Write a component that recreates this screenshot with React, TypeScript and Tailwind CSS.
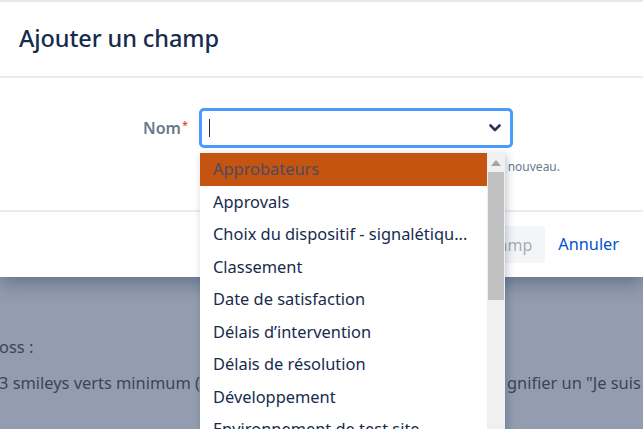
import React from "react";

const items = [
  "Approbateurs",
  "Approvals",
  "Choix du dispositif - signalétiqu...",
  "Classement",
  "Date de satisfaction",
  "Délais d’intervention",
  "Délais de résolution",
  "Développement",
  "Environnement de test site",
];

export default function App() {
  return (
    <div
      className="relative w-[643px] h-[429px] overflow-hidden bg-[#939daf]"
      style={{ fontFamily: '"Noto Sans", "Open Sans", sans-serif' }}
    >
      {/* Dialog */}
      <div className="relative z-10 bg-white border-t-2 border-[#e6e8ec] shadow-[0_6px_18px_rgba(9,30,66,0.35)]">
        <div className="h-[76px] flex items-center px-[19px] border-b-2 border-[#ebecf0]">
          <h1 className="text-[23.5px] font-medium text-[#172b4d] tracking-[-0.1px]">Ajouter un champ</h1>
        </div>
        <div className="h-[132px] pt-[30px]">
          <div className="flex items-center">
            <div className="w-[188px] text-right text-[16px] font-semibold text-[#6b778c]">
              Nom<sup className="text-[#de350b] text-[11px] ml-[1px] font-normal">*</sup>
            </div>
            <div className="ml-[11px] w-[314px] h-[40px] border-[3px] border-[#4c9aff] rounded-[5px] flex items-center justify-between px-[7px]">
              <div className="w-[1px] h-[18px] bg-[#172b4d]" />
              <svg width="12" height="8" viewBox="0 0 12 8" className="mr-[2px]">
                <path d="M1.5 1.5 L6 6 L10.5 1.5" fill="none" stroke="#253858" strokeWidth="2.6" strokeLinecap="round" strokeLinejoin="round" />
              </svg>
            </div>
          </div>
          <div className="ml-[199px] w-[361px] mt-[10px] text-right whitespace-nowrap text-[12px] text-[#6b778c]">
            Choisissez un champ existant ou créez-en un nouveau.
          </div>
        </div>
        <div className="h-[67px] border-t-2 border-[#ebecf0] flex items-center justify-end pr-[12px]">
          <button className="h-[37px] px-[13px] rounded-[3px] bg-[#f4f5f7] text-[16px] text-[#a5adba]">
            Ajouter un champ
          </button>
          <button className="h-[37px] px-[12px] ml-[1px] text-[16.3px] text-[#0052cc]">Annuler</button>
        </div>
      </div>

      {/* Page behind blanket */}
      <div className="pt-[59px] text-[16.4px] text-[#3a4558] leading-[22px]">
        <p className="ml-[-1px]">oss :</p>
        <div className="grid grid-cols-[507px_1fr] mt-[14px]">
          <span className="whitespace-nowrap ml-[-1px]">3 smileys verts minimum (</span>
          <span className="whitespace-nowrap">gnifier un "Je suis satisfait"</span>
        </div>
        <p className="mt-[30px] ml-[20px] whitespace-nowrap">considérée comme une réussite, il faut</p>
      </div>

      {/* Dropdown menu */}
      <div className="absolute z-20 left-[200px] top-[153px] w-[305px] h-[300px] flex bg-white shadow-[2px_2px_8px_rgba(9,30,66,0.25)]">
        <ul className="w-[287px]">
          {items.map((it, i) => (
            <li
              key={it}
              className={
                "h-[32.5px] flex items-center px-[13px] pt-[1px] text-[16.4px] whitespace-nowrap " +
                (i === 0 ? "bg-[#c4540f] text-[#4f4a63]" : "text-[#172b4d]")
              }
            >
              {it}
            </li>
          ))}
        </ul>
        <div className="w-[18px] bg-[#f0f0f0] flex flex-col items-center">
          <div className="h-[19px] flex items-center justify-center">
            <svg width="10" height="6" viewBox="0 0 10 6">
              <path d="M0 6 L5 0 L10 6 Z" fill="#a3a3a3" />
            </svg>
          </div>
          <div className="w-[16px] h-[128px] bg-[#c1c1c1]" />
        </div>
      </div>
    </div>
  );
}
